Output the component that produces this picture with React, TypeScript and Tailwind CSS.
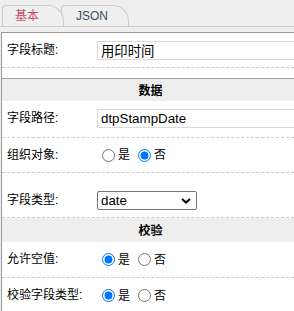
import React from "react";

function Radio({ name, checked, label }: { name: string; checked: boolean; label: string }) {
  return (
    <label className="flex items-center">
      <input
        type="radio"
        name={name}
        defaultChecked={checked}
        className="ml-[5px] mr-[3px] h-[13px] w-[13px]"
      />
      <span className="leading-[16px]">{label}</span>
    </label>
  );
}

function Label({ children }: { children: React.ReactNode }) {
  return <div className="w-[95px] shrink-0 pl-[5px] leading-[19px]">{children}</div>;
}

export default function App() {
  return (
    <div className="w-[294px] h-[311px] overflow-hidden bg-[#eeeeee] text-[12px] text-black font-['Liberation_Sans','Noto_Sans_CJK_SC',sans-serif]">
      <div className="flex h-[27px] items-end border-b border-[#cccccc] pl-[2px]">
        <div className="relative z-10 flex h-[21px] w-[62px] items-center rounded-tl-[4px] rounded-tr-[16px] border border-b-0 border-[#cccccc] bg-[#efefef] pl-[12px] text-[#c8505c] leading-[16px]">
          基本
        </div>
        <div className="-ml-[3px] flex h-[21px] w-[68px] items-center rounded-tl-[4px] rounded-tr-[16px] border border-b-0 border-[#cccccc] bg-[#efefef] pl-[14px] text-[#3c4a6a] leading-[16px]">
          JSON
        </div>
      </div>

      <div className="mt-[5px] ml-[1px] w-[298px] border-l border-t border-[#999999] bg-white">
        <div className="flex h-[35px] items-center border-b border-dashed border-[#cccccc]">
          <Label>字段标题:</Label>
          <input
            defaultValue="用印时间"
            className="h-[19px] w-[200px] border border-[#d9d9d9] bg-white px-[3px] text-[13.33px] leading-[17px] outline-none"
          />
        </div>

        <div className="h-[10px]" />

        <div className="flex h-[23px] justify-center border-t border-[#a0a0a0] bg-[#eeeeee] pt-[3px] font-bold leading-[18px]">
          数据
        </div>

        <div className="flex h-[37px] items-center border-b border-dashed border-[#cccccc] pb-[2px]">
          <Label>字段路径:</Label>
          <input
            defaultValue="dtpStampDate"
            className="h-[19px] w-[200px] border border-[#d9d9d9] bg-white px-[3px] text-[13.33px] leading-[17px] outline-none"
          />
        </div>

        <div className="flex h-[35px] items-center border-b border-dashed border-[#cccccc]">
          <Label>组织对象:</Label>
          <div className="flex items-center gap-[3px]">
            <Radio name="org" checked={false} label="是" />
            <Radio name="org" checked={true} label="否" />
          </div>
        </div>

        <div className="flex h-[45px] items-end border-b border-dashed border-[#cccccc] pb-[7px]">
          <Label>字段类型:</Label>
          <div className="relative h-[19px] w-[100px]">
            <select
              defaultValue="date"
              className="h-[19px] w-[100px] appearance-none rounded-[2px] border border-[#767676] bg-white pl-[3px] text-[13.33px] leading-[17px] outline-none"
            >
              <option value="date">date</option>
              <option value="string">string</option>
              <option value="number">number</option>
            </select>
            <svg
              className="pointer-events-none absolute right-[6px] top-[7px]"
              width="10"
              height="6"
              viewBox="0 0 10 6"
            >
              <path d="M1 1 L5 4.6 L9 1" fill="none" stroke="#000" strokeWidth="2" />
            </svg>
          </div>
        </div>

        <div className="flex h-[24px] justify-center bg-[#eeeeee] pt-[4px] font-bold leading-[18px]">
          校验
        </div>

        <div className="flex h-[36px] items-center border-b border-dashed border-[#cccccc]">
          <Label>允许空值:</Label>
          <div className="flex items-center gap-[3px]">
            <Radio name="nullable" checked={true} label="是" />
            <Radio name="nullable" checked={false} label="否" />
          </div>
        </div>

        <div className="flex h-[35px] items-center">
          <Label>校验字段类型:</Label>
          <div className="flex items-center gap-[3px]">
            <Radio name="check" checked={true} label="是" />
            <Radio name="check" checked={false} label="否" />
          </div>
        </div>
      </div>
    </div>
  );
}
